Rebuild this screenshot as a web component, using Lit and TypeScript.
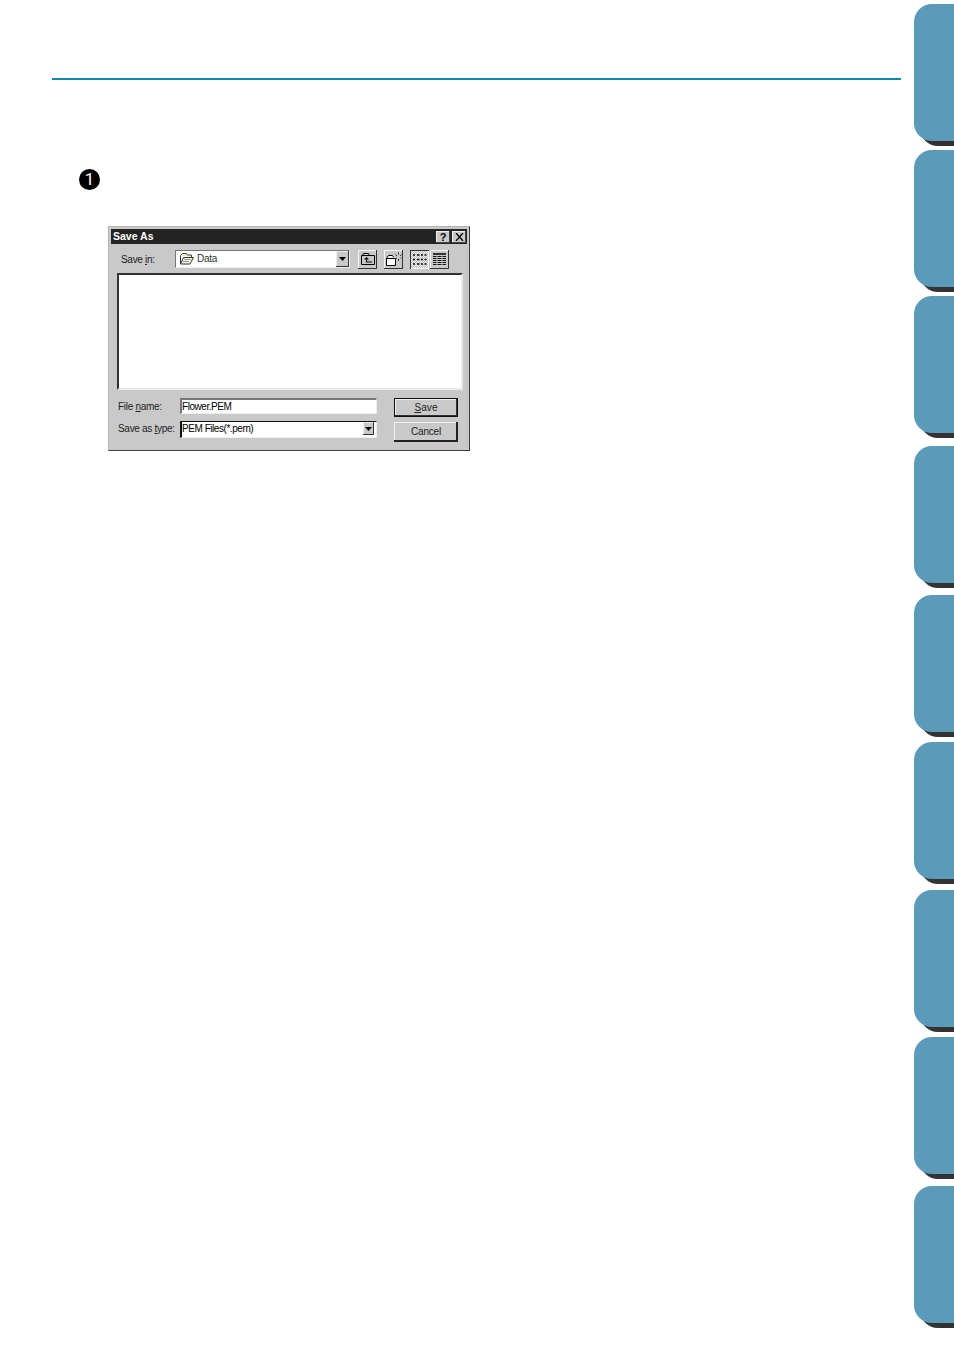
import { LitElement, html, css, svg } from "lit";
import { customElement } from "lit/decorators.js";

const TAB_TOPS = [4, 150, 296, 446, 595, 742, 890, 1037, 1186];
const TAB_H = 137;

@customElement("app-root")
export class AppRoot extends LitElement {
  static styles = css`
    :host { display: block; width: 954px; height: 1348px; background: #fff; overflow: hidden;
      font-family: "Liberation Sans", Arial, sans-serif; color: #000; }
    .page { display: flex; width: 954px; height: 1348px; overflow: hidden; }
    .main { width: 849px; margin-left: 52px; flex: none; }
    .rule { height: 2px; margin-top: 78px; background: #0a8ab0; }
    .step { display: flex; margin: 89px 0 0 27px; }
    .bullet { width: 21px; height: 21px; border-radius: 50%; background: #000; color: #fff;
      font-family: Roboto, sans-serif; font-size: 17px; line-height: 21px; text-align: center; }
    .dialog { box-sizing: border-box; width: 362px; height: 225px; margin: 36px 0 0 56px;
      background: #c9c9c9; padding: 2px 2px 0 2px;
      border-top: 1px solid #b5b5b5; border-left: 1px solid #b5b5b5;
      border-right: 1px solid #3c3c3c; border-bottom: 1px solid #3c3c3c;
      font-size: 10px; letter-spacing: -.3px; }
    .title { box-sizing: border-box; height: 15px; background: #242424; color: #fff; font-weight: bold; font-size: 10.5px;
      display: flex; align-items: center; padding: 0 1px 0 2px; letter-spacing: 0; }
    .title span { flex: 1; padding-bottom: 2px; }
    .tb { width: 14px; height: 12px; margin-left: 2px; background: #c9c9c9; color: #000;
      font-size: 11px; font-weight: bold; line-height: 12px; text-align: center;
      box-shadow: inset -1px -1px 0 #444, inset 1px 1px 0 #f0f0f0; display: flex;
      align-items: center; justify-content: center; }
    .row1 { display: flex; align-items: center; height: 22px; margin-top: 4px; color: #222; }
    .lbl-in { width: 64px; padding-left: 10px; flex: none; box-sizing: border-box; white-space: nowrap; }
    u { text-underline-offset: 1px; }
    .combo { box-sizing: border-box; width: 175px; height: 18px; background: #fff;
      border-top: 1px solid #777; border-left: 1px solid #777;
      border-right: 1px solid #eee; border-bottom: 1px solid #eee;
      display: flex; align-items: center; padding-left: 4px; gap: 3px; color: #333; }
    .combo .txt { flex: 1; white-space: nowrap; overflow: hidden; line-height: 12px; }
    .drop { width: 13px; height: 16px; flex: none; background: #c9c9c9; display: flex;
      align-items: center; justify-content: center;
      box-shadow: inset -1px -1px 0 #333, inset 1px 1px 0 #eee; }
    .tool { box-sizing: border-box; width: 19px; height: 19px; display: flex; align-items: center;
      justify-content: center; box-shadow: inset -1px -1px 0 #333, inset 1px 1px 0 #f4f4f4; }
    .tool.first { margin-left: 8px; }
    .tool.gap { margin-left: 7px; }
    .tool.next { margin-left: 1px; }
    .tool.on { background-color: #e6e6e6;
      background-image: repeating-conic-gradient(#bdbdbd 0 25%, #f2f2f2 0 50%);
      background-size: 2px 2px;
      box-shadow: inset 1px 1px 0 #333, inset -1px -1px 0 #f4f4f4; }
    svg { display: block; }
    .list { box-sizing: border-box; width: 346px; height: 117px; margin: 3px 0 0 6px; background: #fff;
      border-top: 2px solid #333; border-left: 2px solid #333;
      border-right: 2px solid #e8e8e8; border-bottom: 2px solid #e8e8e8; }
    .bottom { display: flex; margin-top: 8px; }
    .fields { width: 283px; flex: none; color: #222; }
    .frow { display: flex; align-items: center; }
    .frow + .frow { margin-top: 7px; }
    .flbl { width: 69px; padding-left: 7px; box-sizing: border-box; flex: none; white-space: nowrap; }
    .frow + .frow .flbl { padding-bottom: 2px; }
    .input { box-sizing: border-box; width: 197px; height: 16px; background: #fff; color: #000;
      border-top: 2px solid #777; border-left: 2px solid #777; border-right: 1px solid #eee; border-bottom: 1px solid #eee;
      padding-left: 0; line-height: 14px; white-space: nowrap; letter-spacing: -.45px; }
    .input.sel { display: flex; height: 17px; padding-right: 2px; border-top: 1px solid #111; border-left-color: #111; align-items: flex-start; line-height: 14px; }
    .input.sel span { flex: 1; }
    .input.sel .drop { width: 11px; height: 13px; }
    .btns { display: flex; flex-direction: column; gap: 5px; }
    .btn { box-sizing: border-box; width: 64px; height: 20px; display: flex; align-items: center;
      justify-content: center; color: #222; letter-spacing: -.2px; padding-bottom: 2px;
      box-shadow: inset -2px -2px 0 #222, inset 1px 1px 0 #f0f0f0; }
    .btn.def { border: 1px solid #111; height: 19px; padding-bottom: 0; box-shadow: inset -1px -1px 0 #333, inset 1px 1px 0 #f0f0f0; letter-spacing: .1px; }
    .side { margin-left: 13px; flex: none; width: 40px; }
    .tab { height: ${TAB_H}px; width: 60px; background: #5b9ab8; border-radius: 18px 0 0 18px;
      box-shadow: 6px 5px 0 #333; }
  `;

  private arrow() {
    return svg`<svg width="7" height="4" viewBox="0 0 7 4"><path d="M0 0h7L3.500 4z" fill="#000"/></svg>`;
  }

  render() {
    return html`<div class="page">
      <div class="main">
        <div class="rule"></div>
        <div class="step"><div class="bullet">1</div></div>
        <div class="dialog">
          <div class="title"><span>Save As</span>
            <div class="tb">?</div>
            <div class="tb"><svg width="9" height="8" viewBox="0 0 9 8"><path d="M1 0l7 8M8 0L1 8" stroke="#000" stroke-width="1.300" fill="none"/></svg></div>
          </div>
          <div class="row1">
            <div class="lbl-in">Save <u>i</u>n:</div>
            <div class="combo">
              <svg width="14" height="12" viewBox="0 0 14 12"><path d="M.5 2.500l2-2h4l1 1.500h4v2" fill="#e8e8d0" stroke="#444"/><path d="M.5 2.500v8.500h9.500l3.500-6.500h-10l-3 6.500" fill="#f4f4e4" stroke="#333"/><path d="M4 6.500h7M3 8.500h6" stroke="#999"/></svg>
              <span class="txt">Data</span>
              <div class="drop">${this.arrow()}</div>
            </div>
            <div class="tool first"><svg width="14" height="12" viewBox="0 0 14 12"><path d="M.5 2.500h13v9H.5zM1.500 2.500l1-2h5l1 2" fill="none" stroke="#000"/><path d="M5.500 4L3 6.500h5z" fill="#000"/><path d="M5.500 6.500v2.500H11" fill="none" stroke="#000" stroke-width="1.200"/></svg></div>
            <div class="tool gap"><svg width="17" height="14" viewBox="0 0 17 14"><path d="M1.500 6.500h9v7h-9zM1.500 6.500l2-3h4l1 1.500" fill="#fff" stroke="#000"/><path d="M13.500 .5v2M10.500 2.500l1.500 1.500M16.500 2.500L15 4M12 6h-1M16.500 6h-1M13.500 7v2" stroke="#333" fill="none"/></svg></div>
            <div class="tool on gap"><svg width="15" height="13" viewBox="0 0 15 13"><path d="M1 2h2M5 2h2.500M9 2h2M12.500 2h2M1 6.500h2M5 6.500h2.500M9 6.500h2M12.500 6.500h2M1 11h2M5 11h2.500M9 11h2M12.500 11h2" stroke="#111" stroke-width="1.600" fill="none"/></svg></div>
            <div class="tool next"><svg width="15" height="13" viewBox="0 0 15 13"><path d="M1 1h13" stroke="#000" stroke-width="1.500"/><path d="M1 3.500h13M1 5.500h13M1 7.500h13M1 9.500h13M1 11.500h13" stroke="#111"/><path d="M5 3v9.500M10 3v9.500" stroke="#c9c9c9"/></svg></div>
          </div>
          <div class="list"></div>
          <div class="bottom">
            <div class="fields">
              <div class="frow"><div class="flbl">File <u>n</u>ame:</div><div class="input">Flower.PEM</div></div>
              <div class="frow"><div class="flbl">Save as <u>t</u>ype:</div><div class="input sel"><span>PEM Files(*.pem)</span><div class="drop">${this.arrow()}</div></div></div>
            </div>
            <div class="btns">
              <div class="btn def"><span><u>S</u>ave</span></div>
              <div class="btn">Cancel</div>
            </div>
          </div>
        </div>
      </div>
      <div class="side">
        ${TAB_TOPS.map((t, i) => html`<div class="tab" style="margin-top:${i ? t - TAB_TOPS[i - 1] - TAB_H : t}px"></div>`)}
      </div>
    </div>`;
  }
}
